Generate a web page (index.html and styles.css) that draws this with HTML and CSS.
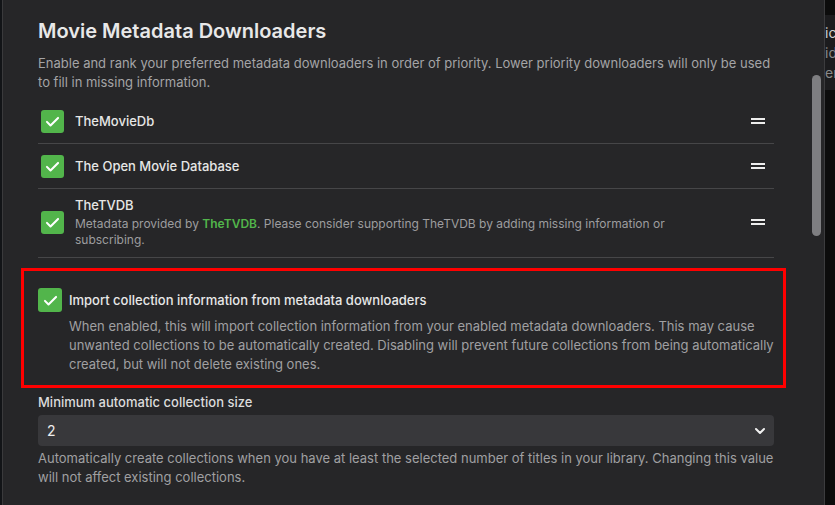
FILE: index.html
```html
<!DOCTYPE html>
<html lang="en">
<head>
    <meta charset="UTF-8">
    <meta name="viewport" content="width=device-width, initial-scale=1.0">
    <title>Library options</title>

    <link rel="stylesheet" href="styles.css">
</head>
<body>

    <div class="Screen">
        <div class="Screen__edge"></div>

        <div class="Dialog">
            <div class="Dialog__content">
                <h2>Movie Metadata Downloaders</h2>
                <p class="Dialog__desc">Enable and rank your preferred metadata downloaders in order of priority. Lower priority downloaders will only be used to fill in missing information.</p>

                <!-- список загрузчиков -->
                <div class="Fetchers">
                    <div class="Fetchers__row">
                        <span class="Check"><svg viewBox="0 0 24 24"><path d="M5 12.5l4.5 4.5L19 7.5"/></svg></span>
                        <div class="Fetchers__text">
                            <div class="Fetchers__name">TheMovieDb</div>
                        </div>
                        <span class="Handle"></span>
                    </div>
                    <div class="Fetchers__row">
                        <span class="Check"><svg viewBox="0 0 24 24"><path d="M5 12.5l4.5 4.5L19 7.5"/></svg></span>
                        <div class="Fetchers__text">
                            <div class="Fetchers__name">The Open Movie Database</div>
                        </div>
                        <span class="Handle"></span>
                    </div>
                    <div class="Fetchers__row Fetchers__row--tall">
                        <span class="Check"><svg viewBox="0 0 24 24"><path d="M5 12.5l4.5 4.5L19 7.5"/></svg></span>
                        <div class="Fetchers__text">
                            <div class="Fetchers__name">TheTVDB</div>
                            <div class="Fetchers__info">Metadata provided by <a href="#">TheTVDB</a>. Please consider supporting TheTVDB by adding missing information or subscribing.</div>
                        </div>
                        <span class="Handle"></span>
                    </div>
                </div>

                <div class="Highlight">
                    <label class="Option">
                        <span class="Check"><svg viewBox="0 0 24 24"><path d="M5 12.5l4.5 4.5L19 7.5"/></svg></span>
                        <span class="Option__label">Import collection information from metadata downloaders</span>
                    </label>
                    <p class="Option__desc">When enabled, this will import collection information from your enabled metadata downloaders. This may cause unwanted collections to be automatically created. Disabling will prevent future collections from being automatically created, but will not delete existing ones.</p>
                </div>

                <div class="Field">
                    <div class="Field__label">Minimum automatic collection size</div>
                    <div class="Select">
                        <span>2</span>
                        <svg viewBox="0 0 24 24"><path d="M6 9l6 6 6-6"/></svg>
                    </div>
                    <p class="Field__desc">Automatically create collections when you have at least the selected number of titles in your library. Changing this value will not affect existing collections.</p>
                </div>
            </div>

            <div class="Dialog__scroll"></div>
        </div>

        <div class="Screen__side">
            <div class="Screen__panel">
                <span>ic</span>
                <span class="dim">id</span>
                <span class="dim">er</span>
            </div>
        </div>
    </div>

</body>
</html>
```

FILE: styles.css
```css
* {
    box-sizing: border-box;
}

body {
    margin: 0;
    background: #0c0c0c;
    font-family: 'Inter', 'Noto Sans', sans-serif;
    color: #e6e6e6;
    overflow: hidden;
}

.Screen {
    display: flex;
    height: 505px;
}

.Screen__edge {
    width: 3px;
    background: #121417;
    border-right: 1px solid #3a3a3c;
}

.Dialog {
    position: relative;
    width: 822px;
    background: #262628;
    border-right: 1px solid #3c3c3e;
}

.Dialog__content {
    padding: 17px 50px 0 35px;
}

.Dialog h2 {
    margin: 0;
    font-size: 20px;
    font-weight: 600;
    line-height: 28px;
    color: #e8e8e8;
}

.Dialog__desc {
    margin: 9px 0 0;
    font-size: 13px;
    line-height: 19px;
    color: #a4a4a6;
}

.Fetchers {
    margin-top: 7px;
}

.Fetchers__row {
    display: flex;
    align-items: center;
    min-height: 45px;
    border-bottom: 1px solid #464648;
    padding: 0 0 0 3px;
}

.Fetchers__row--tall {
    padding-top: 7px;
    padding-bottom: 9px;
}

.Fetchers__text {
    flex: 1;
    margin-left: 11px;
    padding-right: 60px;
}

.Fetchers__name {
    font-size: 13px;
    font-weight: 500;
    line-height: 18px;
    color: #e6e6e6;
}

.Fetchers__info {
    margin-top: 2px;
    font-size: 12px;
    line-height: 16px;
    color: #9d9d9f;
}

.Fetchers__info a {
    color: #52b54b;
    font-weight: 600;
    text-decoration: none;
}

.Check {
    flex: none;
    width: 23px;
    height: 23px;
    border-radius: 3px;
    background: #52b54b;
    display: flex;
    align-items: center;
    justify-content: center;
}

.Check svg {
    width: 19px;
    height: 19px;
    fill: none;
    stroke: #fff;
    stroke-width: 2.6;
    stroke-linecap: round;
    stroke-linejoin: round;
}

.Handle {
    width: 14px;
    height: 6px;
    margin-right: 9px;
    border-top: 2px solid #ededed;
    border-bottom: 2px solid #ededed;
}

.Highlight {
    margin: 10px -12px 0 -17px;
    border: 3px solid #ff0000;
    padding: 17px 5px 11px 14px;
}

.Option {
    display: flex;
    align-items: center;
}

.Option .Check {
    width: 24px;
    height: 24px;
}

.Option__label {
    margin-left: 7px;
    font-size: 13px;
    font-weight: 500;
    color: #e8e8e8;
}

.Option__desc {
    margin: 5px 0 0 31px;
    font-size: 13px;
    line-height: 19px;
    color: #a0a0a2;
}

.Field {
    margin-top: 5px;
}

.Field__label {
    font-size: 13px;
    font-weight: 500;
    line-height: 18px;
    color: #dcdcdc;
}

.Select {
    margin-top: 4px;
    height: 31px;
    border-radius: 4px;
    background: #38383b;
    display: flex;
    align-items: center;
    justify-content: space-between;
    padding: 0 6px 0 9px;
    font-size: 14px;
    color: #eee;
}

.Select svg {
    width: 16px;
    height: 16px;
    fill: none;
    stroke: #f0f0f0;
    stroke-width: 3;
    stroke-linecap: round;
    stroke-linejoin: round;
}

.Field__desc {
    margin: 3px 0 0;
    font-size: 13px;
    line-height: 19px;
    color: #a0a0a2;
}

.Dialog__scroll {
    position: absolute;
    top: 75px;
    left: 809px;
    width: 9px;
    height: 161px;
    border-radius: 5px;
    background: #7e7e81;
}

.Screen__side {
    flex: 1;
    overflow: hidden;
}

.Screen__panel {
    margin-top: 15px;
    height: 75px;
    background: #1c1c1e;
    display: flex;
    flex-direction: column;
    padding: 8px 0 0;
    font-size: 14px;
    line-height: 20px;
    color: #d0d0d0;
    white-space: nowrap;
}

.Screen__panel .dim {
    color: #8a8a8a;
}
```
